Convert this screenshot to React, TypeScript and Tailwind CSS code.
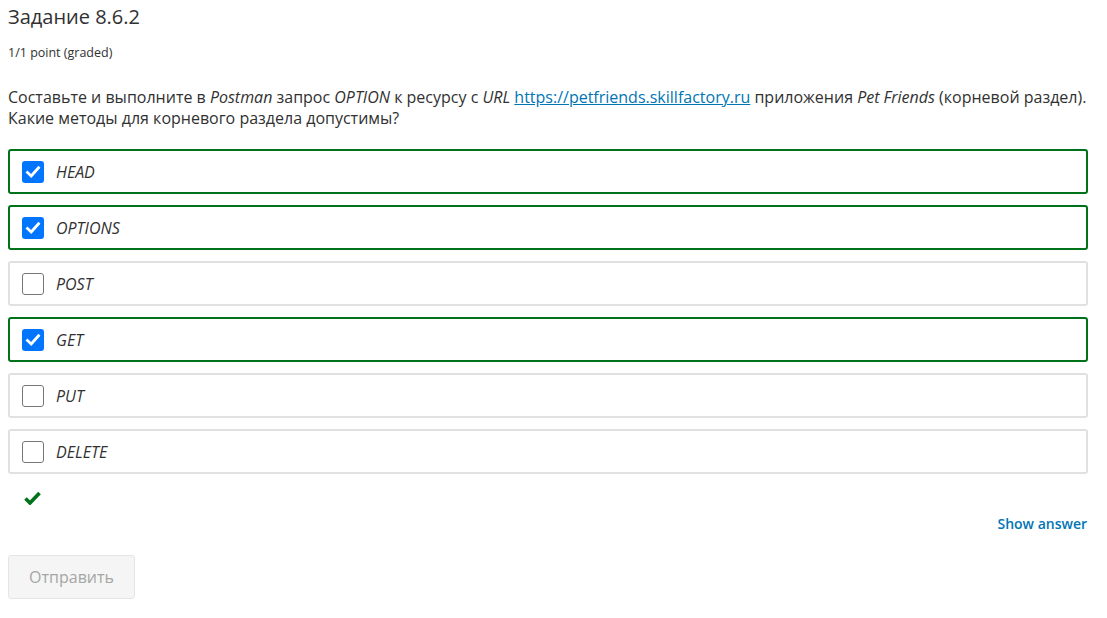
const options = [
  { label: 'HEAD', checked: true },
  { label: 'OPTIONS', checked: true },
  { label: 'POST', checked: false },
  { label: 'GET', checked: true },
  { label: 'PUT', checked: false },
  { label: 'DELETE', checked: false },
];

function Checkbox({ checked }: { checked: boolean }) {
  if (checked) {
    return (
      <span className="w-[22px] h-[22px] rounded-[3px] bg-[#0075ff] flex items-center justify-center shrink-0">
        <svg width="16" height="16" viewBox="0 0 16 16" fill="none">
          <path d="M2.5 8.5 L6.2 12 L13.5 3.8" stroke="white" strokeWidth="2.8" strokeLinecap="square" />
        </svg>
      </span>
    );
  }
  return <span className="w-[22px] h-[22px] rounded-[3px] border border-[#767676] bg-white shrink-0" />;
}

export default function App() {
  return (
    <div className="bg-white text-[#313131] pl-2 w-[1088px]" style={{ fontFamily: '"Open Sans", sans-serif' }}>
      <h2 className="text-[20px] leading-[28px] pt-[3px]">Задание 8.6.2</h2>
      <div className="text-[12.5px] mt-[12px] leading-[20px]">1/1 point (graded)</div>
      <p className="text-[16px] leading-[21px] mt-[24px]">
        Составьте и выполните в <em>Postman</em> запрос <em>OPTION</em> к ресурсу с <em>URL</em>{' '}
        <a className="text-[#0075b4] underline" href="#">https://petfriends.skillfactory.ru</a> приложения{' '}
        <em>Pet Friends</em> (корневой раздел). Какие методы для корневого раздела допустимы?
      </p>
      <div className="flex flex-col gap-[11px] mt-[20px]">
        {options.map((o) => (
          <label
            key={o.label}
            className={`h-[45px] rounded-[3px] border-2 flex items-center pl-[12px] gap-[12px] ${
              o.checked ? 'border-[#00721a]' : 'border-[#e1e1e1]'
            }`}
          >
            <Checkbox checked={o.checked} />
            <span className="italic text-[16px]">{o.label}</span>
          </label>
        ))}
      </div>
      <div className="pl-[16px] mt-[17px] h-[16px]">
        <svg width="17" height="14" viewBox="0 0 17 14">
          <path d="M1.5 7.5 L6 12 L15.5 2" stroke="#00721a" strokeWidth="3.6" fill="none" />
        </svg>
      </div>
      <div className="flex justify-end mt-[7px] pr-px">
        <button className="text-[#0075b4] text-[14px] font-semibold leading-[20px]">Show answer</button>
      </div>
      <button className="mt-[21px] h-[44px] w-[127px] rounded-[3px] border border-[#e5e5e5] bg-[#f5f5f5] text-[#a5a5a5] text-[16px]">
        Отправить
      </button>
    </div>
  );
}
